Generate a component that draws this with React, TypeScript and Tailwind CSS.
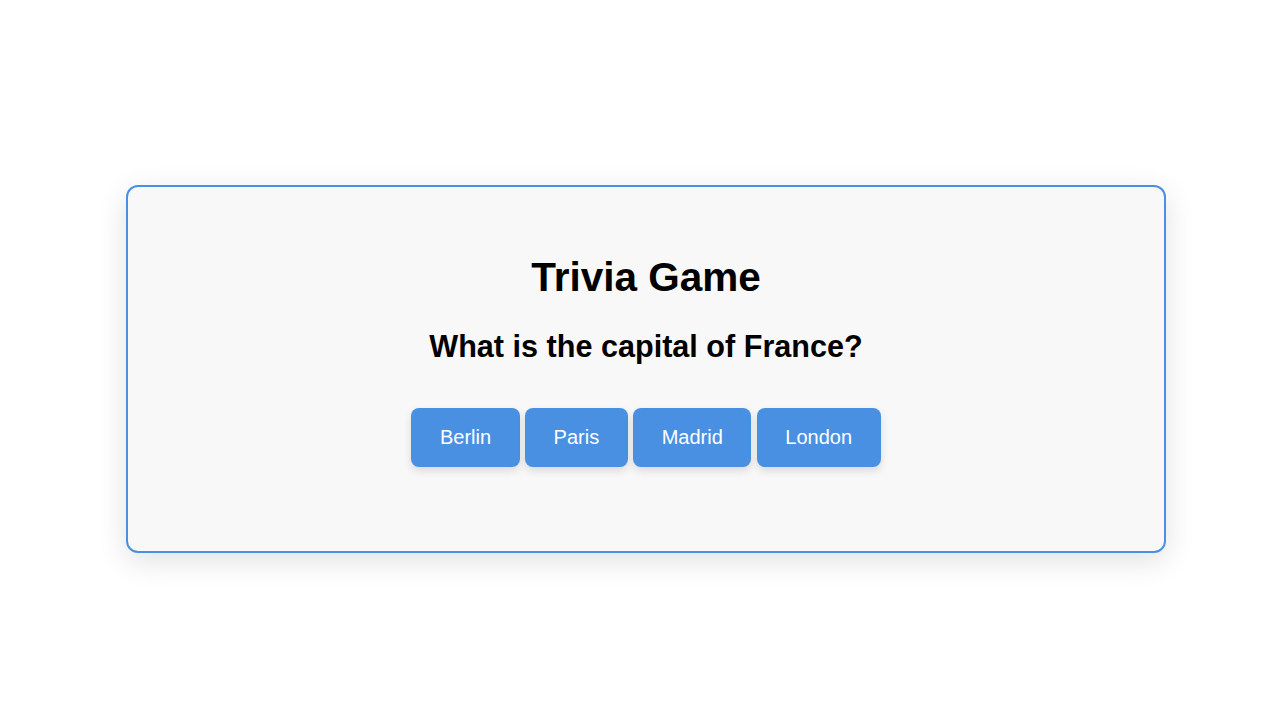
export default function App() {
  const answers = ["Berlin", "Paris", "Madrid", "London"];

  return (
    <div
      className="min-h-screen bg-white pt-[185px] pl-[126px]"
      style={{ fontFamily: '"Liberation Sans", Arial, sans-serif' }}
    >
      <div className="w-[1040px] rounded-[12px] border-2 border-[#4a90e2] bg-[#f8f8f8] pt-[67px] pb-[84px] shadow-[0_8px_30px_rgba(0,0,0,0.12)] flex flex-col items-center text-black">
        <h1 className="text-[40.5px] font-bold leading-[46px] mb-[29px]">Trivia Game</h1>
        <h2 className="text-[30.6px] font-bold leading-[35px] mb-[44px]">
          What is the capital of France?
        </h2>
        <div className="flex gap-[5.5px]">
          {answers.map((a) => (
            <button
              key={a}
              className="bg-[#4a90e2] text-white text-[20px] leading-[23px] py-[18px] px-[28.5px] rounded-[8px] shadow-[0_4px_8px_rgba(0,0,0,0.12)]"
            >
              {a}
            </button>
          ))}
        </div>
      </div>
    </div>
  );
}
